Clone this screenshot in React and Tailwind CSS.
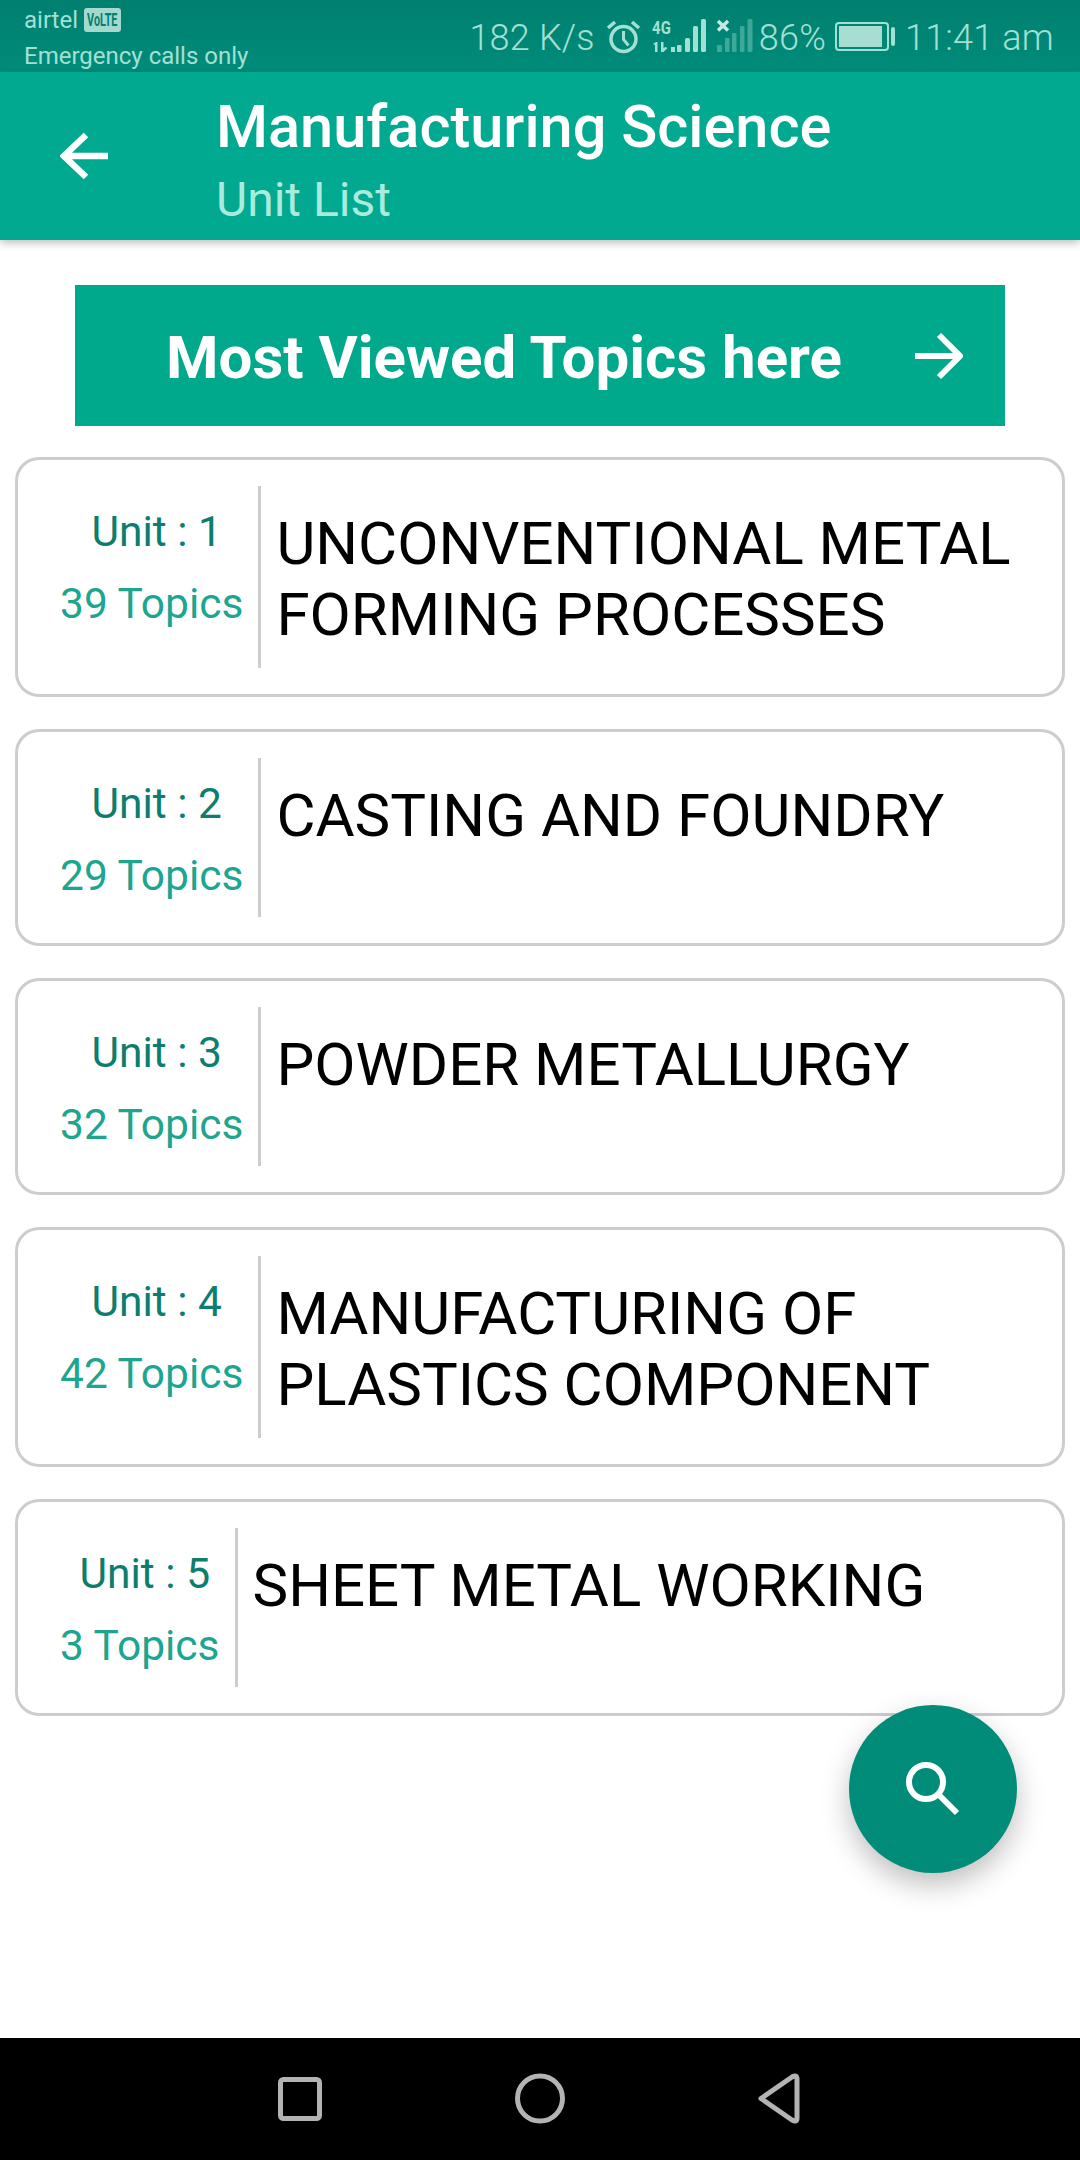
const units = [
  { unit: "Unit : 1", topics: "39 Topics", title: ["UNCONVENTIONAL METAL", "FORMING PROCESSES"] },
  { unit: "Unit : 2", topics: "29 Topics", title: ["CASTING AND FOUNDRY"] },
  { unit: "Unit : 3", topics: "32 Topics", title: ["POWDER METALLURGY"] },
  { unit: "Unit : 4", topics: "42 Topics", title: ["MANUFACTURING OF", "PLASTICS COMPONENT"] },
  { unit: "Unit : 5", topics: "3 Topics", title: ["SHEET METAL WORKING"] },
];

function StatusIcons() {
  const c = "#a3e0d4";
  return (
    <svg width="146" height="72" viewBox="608 0 146 72" fill="none" className="shrink-0">
      {/* alarm */}
      <circle cx="624.5" cy="39" r="12.5" stroke={c} strokeWidth="3.500" />
      <path d="M624.500 31v8.500l5 6" stroke={c} strokeWidth="3" />
      <path d="M609 28l7-6M640 28l-7-6" stroke={c} strokeWidth="3.500" />
      {/* 4G */}
      <text x="653" y="34" fontSize="19" fontWeight="700" fontFamily="Roboto" fill={c} textLength="19" lengthAdjust="spacingAndGlyphs">4G</text>
      <path d="M654 44l3-2h1.500v10H656v-7zM662 42h2.500v6l2-1 2 1-4 4h-2.500zM671 44l-1 0z" fill={c} />
      <rect x="672" y="47" width="4" height="5" fill={c} />
      {/* signal 1 */}
      <g fill={c}>
        <rect x="678" y="45" width="4.500" height="7" rx="1" />
        <rect x="686" y="38" width="5" height="14" rx="1.500" />
        <rect x="694" y="26" width="5" height="26" rx="1.500" />
        <rect x="702" y="19" width="5" height="33" rx="1.500" />
      </g>
      {/* signal 2 */}
      <path d="M719 21l10 9.500M729 21l-10 9.500" stroke="#c5ece4" strokeWidth="3.500" />
      <g fill={c} fillOpacity="0.38">
        <rect x="718" y="45" width="5" height="7" rx="1" />
        <rect x="726" y="38" width="4.500" height="14" rx="1" />
        <rect x="733" y="33" width="4.500" height="19" rx="1" />
        <rect x="741" y="26" width="4.500" height="26" rx="1" />
        <rect x="748.500" y="19" width="5" height="33" rx="1.500" />
      </g>
    </svg>
  );
}

function Battery() {
  return (
    <div className="flex items-center ml-[9px] mr-[10px] shrink-0">
      <div className="w-[54px] h-[29px] rounded-[4px] border-2 border-[#a3e0d4] p-[2px]">
        <div className="h-full w-[43px] bg-[#a8ddd2]" />
      </div>
      <div className="w-[4px] h-[19px] ml-[2px] rounded-[2px] bg-[#a3e0d4]" />
    </div>
  );
}

function Card({ unit, topics, title }) {
  return (
    <div className="flex border-[3px] border-[#cdcdcd] rounded-[24px] py-[26px] pl-[42px] bg-white">
      <div className="flex flex-col items-center pr-[15px] border-r-[3px] border-[#cdcdcd] pt-[10px] pb-[5px]">
        <div className="text-[42.5px] leading-[72px] pl-[10px] text-[#0d7d6e] whitespace-nowrap">{unit}</div>
        <div className="text-[42.5px] leading-[72px] text-[#1ea58f] whitespace-nowrap">{topics}</div>
      </div>
      <div className="pl-[15px] pt-[22px] pb-[18px] text-[60px] leading-[71px] text-black whitespace-nowrap">
        {title.map((t) => (
          <div key={t}>{t}</div>
        ))}
      </div>
    </div>
  );
}

export default function App() {
  return (
    <div className="relative w-[1080px] h-[2160px] flex flex-col bg-white overflow-hidden font-['Roboto',sans-serif]">
      <div className="h-[72px] shrink-0 flex items-center justify-between bg-gradient-to-b from-[#007f6f] to-[#008c7a] pl-[24px] pr-[26px] text-[#a3e0d4]">
        <div className="flex flex-col gap-[2px] text-[24px] leading-[34px] mt-[4px]">
          <div className="flex items-center">
            airtel
            <span className="ml-[6px] w-[37px] h-[24px] rounded-[3px] bg-[#a3d9cf] text-[#00806f] text-[18px] leading-[24px] font-bold flex justify-center overflow-hidden">
              <span className="shrink-0 scale-x-[0.6]">VoLTE</span>
            </span>
          </div>
          <div>Emergency calls only</div>
        </div>
        <div className="flex items-center text-[36px] leading-[72px] font-light tracking-[0.2px] pt-[3px]">
          <span className="mr-[12px]">182 K/s</span>
          <div className="-mt-[3px] mr-[6px]">
            <StatusIcons />
          </div>
          <span>86%</span>
          <div className="-mt-[3px]">
            <Battery />
          </div>
          <span>11:41 am</span>
        </div>
      </div>

      <div className="relative h-[168px] shrink-0 flex items-center bg-[#00a98f] shadow-[0_3px_8px_rgba(0,0,0,0.25)]">
        <svg width="48" height="48" viewBox="0 0 48 48" fill="none" stroke="#fff" strokeWidth="6.500" className="ml-[60px] mr-[108px] shrink-0">
          <path d="M48 24H4M26 3L4 24l22 21" />
        </svg>
        <div className="flex flex-col gap-[7px] pt-[9px]">
          <div className="text-[59.5px] leading-[72px] font-medium text-white whitespace-nowrap">Manufacturing Science</div>
          <div className="text-[48px] leading-[60px] text-[#a9ebdd] whitespace-nowrap">Unit List</div>
        </div>
      </div>

      <div className="mt-[45px] mx-[75px] h-[141px] flex items-center justify-between bg-[#00a98b] pl-[91px] pr-[42px]">
        <span className="text-[60px] font-bold text-white whitespace-nowrap pt-[5px]">Most Viewed Topics here</span>
        <svg width="48" height="48" viewBox="0 0 48 48" fill="none" stroke="#fff" strokeWidth="6">
          <path d="M0 24H44M24 3L45 24L24 45" />
        </svg>
      </div>

      <div className="mt-[31px] mx-[15px] flex flex-col gap-[32px]">
        {units.map((u) => (
          <Card key={u.unit} {...u} />
        ))}
      </div>

      <div className="absolute left-[849px] top-[1705px] w-[168px] h-[168px] rounded-full bg-[#008c78] flex items-center justify-center shadow-[0_12px_28px_rgba(0,0,0,0.25)]">
        <svg width="56" height="56" viewBox="0 0 56 56" fill="none" stroke="#fff" strokeWidth="6">
          <circle cx="21" cy="21" r="17" />
          <path d="M33 33l19 19" />
        </svg>
      </div>

      <div className="mt-auto h-[122px] shrink-0 bg-black relative">
        <svg width="1080" height="122" viewBox="0 0 1080 122" fill="none" stroke="#b3b3b3" strokeWidth="5">
          <rect x="280.500" y="41.500" width="39" height="39" rx="3" />
          <circle cx="540" cy="60.500" r="22.500" />
          <path d="M761 60.500L792 39q5-3 5 2V80q0 5-5 2z" strokeLinejoin="round" />
        </svg>
      </div>
    </div>
  );
}
